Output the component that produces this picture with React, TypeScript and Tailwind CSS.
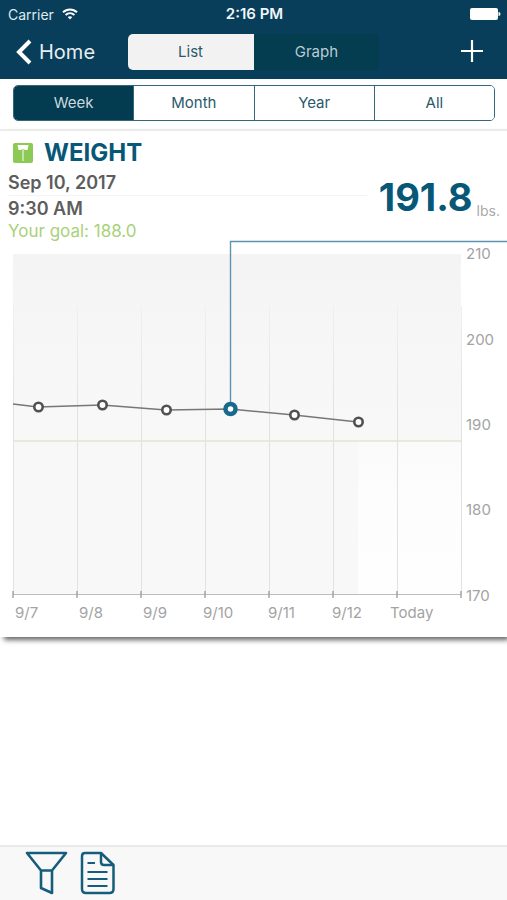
import React, { useState } from "react";

const ranges = ["Week", "Month", "Year", "All"];
const views = ["List", "Graph"];

const days = [
  { label: "9/7", x: 15 },
  { label: "9/8", x: 79 },
  { label: "9/9", x: 143 },
  { label: "9/10", x: 203 },
  { label: "9/11", x: 268 },
  { label: "9/12", x: 332 },
  { label: "Today", x: 390 },
];
const ticks = [13, 77, 141, 205, 269, 333, 397, 461];
const scale = [
  { label: "210", y: 19 },
  { label: "200", y: 105 },
  { label: "190", y: 190 },
  { label: "180", y: 275 },
  { label: "170", y: 361 },
];
const readings = [
  { x: 38, y: 167 },
  { x: 102, y: 165 },
  { x: 166, y: 170 },
  { x: 294, y: 175 },
  { x: 358, y: 182 },
];

function StatusBar() {
  return (
    <div className="grid h-7 grid-cols-3 items-center pr-1.5 pl-2 text-[14px] text-[#dfe9ee]">
      <div className="flex items-center gap-2">
        <span>Carrier</span>
        <svg width="16" height="12" viewBox="0 0 16 12" fill="none" stroke="#fff" strokeWidth="2" aria-label="Wi-Fi">
          <path d="M1 4.3C5 .4 11 .4 15 4.3M3.6 7.1C6.2 4.7 9.8 4.7 12.4 7.1" />
          <path d="M5.7 9.1C7 7.9 9 7.9 10.3 9.1L8 11.5Z" fill="#fff" stroke="none" />
        </svg>
      </div>
      <span className="text-center text-[15px] font-semibold whitespace-nowrap text-[#f1f6f8]">2:16 PM</span>
      <svg className="justify-self-end" width="31" height="12" viewBox="0 0 31 12" fill="#fff" aria-label="Battery full">
        <rect width="28" height="12" rx="2" />
        <path d="M28.500 4a2 2 0 0 1 0 4z" />
      </svg>
    </div>
  );
}

function Chart() {
  return (
    <svg viewBox="0 0 507 397" className="block w-full" role="img" aria-label="Weight by day">
      <defs>
        <linearGradient id="area" x1="0" y1="0" x2="0" y2="1">
          <stop offset="0" stopColor="#f4f4f4" />
          <stop offset=".5" stopColor="#f8f8f8" />
          <stop offset="1" stopColor="#f8f8f8" />
        </linearGradient>
        <linearGradient id="future" x1="0" y1="0" x2="0" y2="1">
          <stop offset="0" stopColor="#fafafa" />
          <stop offset=".38" stopColor="#fdfdfd" />
          <stop offset="1" stopColor="#fefefe" />
        </linearGradient>
        <linearGradient id="grid" gradientUnits="userSpaceOnUse" x1="0" y1="66" x2="0" y2="170">
          <stop offset="0" stopColor="#f0f0f0" />
          <stop offset="1" stopColor="#e1e1e1" />
        </linearGradient>
      </defs>
      <rect x="13" y="14" width="448" height="341" fill="url(#area)" />
      <rect x="358" y="201" width="103" height="154" fill="url(#future)" />
      {ticks.map((x) => (
        <rect key={x} x={x} y="66" width="1" height="288" fill="url(#grid)" />
      ))}
      <path d="M13 201H461" stroke="#dfe8ca" strokeWidth="1.5" />
      <path d="M13 354.5H461" stroke="#bdbdbd" />
      {ticks.map((x) => (
        <path key={x} d={`M${x} 351v7`} stroke="#999" strokeWidth="1.3" />
      ))}
      <path d="M13 164L38 167L102 165L166 170L230 169L294 175L358 182" fill="none" stroke="#777" strokeWidth="1.4" />
      <path d="M230.5 169V1.5H507" fill="none" stroke="#5d92b3" strokeWidth="1.4" />
      {readings.map((p) => (
        <circle key={p.x} cx={p.x + 0.5} cy={p.y} r="4.2" fill="#fff" stroke="#515151" strokeWidth="2.6" />
      ))}
      <circle cx="230.5" cy="169" r="5" fill="#fff" stroke="#19698f" strokeWidth="4.5" />
      <g fill="#a3a3a3" fontSize="15">
        {scale.map((s) => (
          <text key={s.label} x="466" y={s.y}>{s.label}</text>
        ))}
        {days.map((d) => (
          <text key={d.label} x={d.x} y="378">{d.label}</text>
        ))}
      </g>
    </svg>
  );
}

export default function App() {
  const [range, setRange] = useState("Week");
  const [view, setView] = useState("List");

  return (
    <div className="flex min-h-screen flex-col bg-white font-['Inter',sans-serif]">
      <header className="bg-[#083e5a]">
        <StatusBar />
        <nav className="flex h-[51px] items-start px-4">
          <div className="flex-1">
            <button className="flex h-12 items-center gap-[7px] text-[20px] text-[#e6eef2]">
              <svg width="16" height="26" viewBox="0 0 16 26" fill="none" stroke="#fff" strokeWidth="4" aria-hidden="true">
                <path d="M14 2L3 13L14 24" />
              </svg>
              Home
            </button>
          </div>
          <div className="mt-1.5 flex h-9 w-[53%] overflow-hidden rounded-[5px] bg-[#043c50]">
            {views.map((v) => (
              <button
                key={v}
                aria-pressed={view === v}
                onClick={() => setView(v)}
                className={`flex-1 text-[15px] ${view === v ? "bg-[#f2f2f2] text-[#2a5a6a]" : "text-[#b9cbd2]"}`}
              >
                {v}
              </button>
            ))}
          </div>
          <div className="flex flex-1 justify-end">
            <button aria-label="Add entry" className="flex h-[46px] items-center pr-2">
              <svg width="22" height="22" viewBox="0 0 22 22" stroke="#fff" strokeWidth="2.2" aria-hidden="true">
                <path d="M11 0V22M0 11H22" />
              </svg>
            </button>
          </div>
        </nav>
      </header>

      <main className="flex-1">
        <div className="pt-1.5 pr-3 pb-2 pl-[13px]">
          <div className="flex h-9 divide-x divide-[#31687b] overflow-hidden rounded-[5px] border border-[#31687b]">
            {ranges.map((r) => (
              <button
                key={r}
                aria-pressed={range === r}
                onClick={() => setRange(r)}
                className={`flex-1 text-[15px] ${range === r ? "bg-[#033b50] text-[#cbd9de]" : "bg-white text-[#2a5a6a]"}`}
              >
                {r}
              </button>
            ))}
          </div>
        </div>

        <section className="border-t-2 border-[#ebebe9] shadow-[3px_4px_5px_-1px_#666]">
          <div className="px-2">
            <h1 className="flex h-10 items-center gap-2.5 pt-1 pl-1 text-[24px] font-bold text-[#075777]">
              <svg width="22" height="22" viewBox="0 0 22 22" aria-hidden="true">
                <rect x="1" y="1" width="20" height="20" rx="2" fill="#8dc955" />
                <path d="M5.500 3h11l-1 5h-2.500q-2-2-4 0h-2.500z" fill="#fff" />
                <path d="M11 6v13" stroke="#e8f5dc" strokeWidth="1.2" />
              </svg>
              WEIGHT
            </h1>
            <p className="h-6 text-[18px] leading-[24px] font-semibold text-[#5d5d5d]">Sep 10, 2017</p>
          </div>
          <div className="flex justify-between pr-[7px] pl-2">
            <div className="min-w-0 flex-1">
              <div className="mr-1 border-t border-[#f4f4f4]" />
              <p className="h-6 text-[18px] leading-[26px] font-semibold text-[#5d5d5d]">9:30 AM</p>
              <p className="h-5 text-[17px] leading-[22px] text-[#a9d17b]">Your goal: 188.0</p>
            </div>
            <p className="-mt-5 flex h-11 items-end gap-1 pl-2">
              <span className="text-[38px] leading-[44px] font-bold text-[#075777]">191.8</span>
              <span className="text-[14px] leading-4 text-[#aaaaaa]">lbs.</span>
            </p>
          </div>
          <Chart />
        </section>
      </main>

      <footer className="flex h-[55px] items-start gap-3 border-t-2 border-[#eaeaea] bg-[#f8f8f8] px-6 pt-1">
        <button aria-label="Filter">
          <svg width="44" height="44" viewBox="0 0 44 44" fill="none" stroke="#165d7b" strokeWidth="2.6" strokeLinejoin="round" aria-hidden="true">
            <path d="M3 2H42L28 19.500H17ZM17 19.500V37L28 42V19.500" />
          </svg>
        </button>
        <button aria-label="Report">
          <svg width="36" height="44" viewBox="0 0 36 44" fill="none" stroke="#165d7b" strokeWidth="2.5" strokeLinejoin="round" aria-hidden="true">
            <path d="M5 2H21L33.500 14V38Q33.500 42 29.500 42H6Q2 42 2 38V5Q2 2 5 2Z" />
            <path d="M21 2V11Q21 14 24 14H33.500" />
            <path d="M7.500 12H15M7.500 21H27.500M7.500 28H27.500M7.500 35H27.500" strokeWidth="1.8" />
          </svg>
        </button>
      </footer>
    </div>
  );
}
